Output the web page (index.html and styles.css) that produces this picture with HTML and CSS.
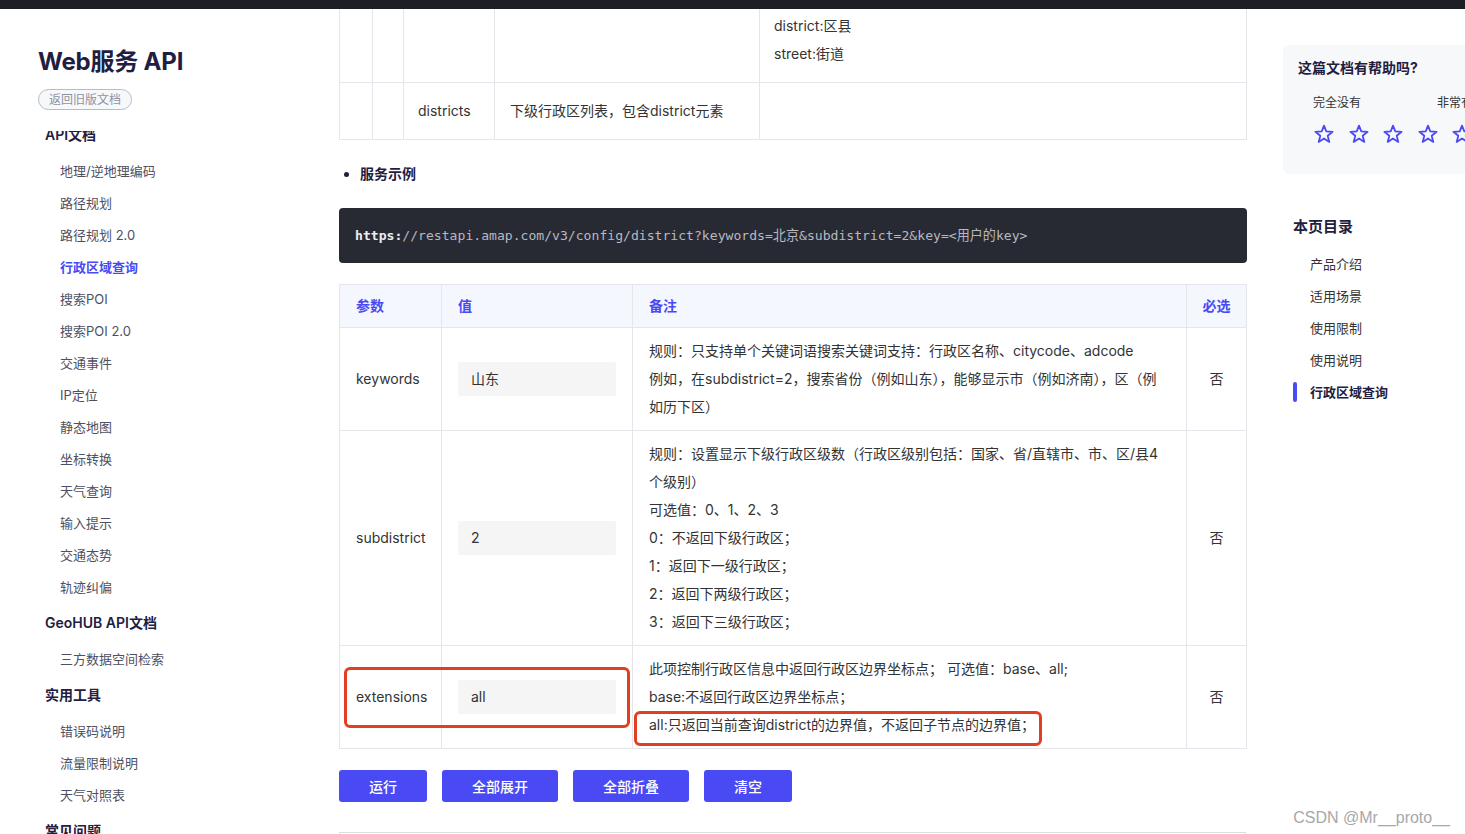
FILE: index.html
```html
<!DOCTYPE html>
<html lang="zh-CN">
<head>
<meta charset="utf-8">
<title>行政区域查询 - Web服务 API</title>
<link rel="stylesheet" href="styles.css">
</head>
<body>
<div class="topbar"></div>
<div class="layout">
  <aside class="sidebar">
    <div class="brand">
      <div class="brand-title">Web服务 API</div>
      <span class="old-link">返回旧版文档</span>
    </div>
    <div class="nav-scroll">
      <ul class="nav">
        <li class="nav-group">API文档</li>
        <li class="nav-item">地理/逆地理编码</li>
        <li class="nav-item">路径规划</li>
        <li class="nav-item">路径规划 2.0</li>
        <li class="nav-item active">行政区域查询</li>
        <li class="nav-item">搜索POI</li>
        <li class="nav-item">搜索POI 2.0</li>
        <li class="nav-item">交通事件</li>
        <li class="nav-item">IP定位</li>
        <li class="nav-item">静态地图</li>
        <li class="nav-item">坐标转换</li>
        <li class="nav-item">天气查询</li>
        <li class="nav-item">输入提示</li>
        <li class="nav-item">交通态势</li>
        <li class="nav-item">轨迹纠偏</li>
        <li class="nav-group">GeoHUB API文档</li>
        <li class="nav-item">三方数据空间检索</li>
        <li class="nav-group">实用工具</li>
        <li class="nav-item">错误码说明</li>
        <li class="nav-item">流量限制说明</li>
        <li class="nav-item">天气对照表</li>
        <li class="nav-group">常见问题</li>
      </ul>
    </div>
  </aside>

  <main class="main">
    <table class="result-table">
      <colgroup>
        <col class="c-indent1"><col class="c-indent2"><col class="c-name"><col class="c-desc"><col class="c-note">
      </colgroup>
      <tr>
        <td></td><td></td><td></td><td></td>
        <td>
          <p>country:国家</p>
          <p>province:省份（直辖市会在province和city显示）</p>
          <p>city:市（直辖市会在province和city显示）</p>
          <p>district:区县</p>
          <p>street:街道</p>
        </td>
      </tr>
      <tr>
        <td></td><td></td>
        <td>districts</td>
        <td class="pad-l">下级行政区列表，包含district元素</td>
        <td></td>
      </tr>
    </table>

    <ul class="section-list">
      <li>服务示例</li>
    </ul>

    <div class="code"><span class="code-scheme">https:</span>//restapi.amap.com/v3/config/district?keywords=北京&amp;subdistrict=2&amp;key=&lt;用户的key&gt;</div>

    <table class="param-table">
      <colgroup>
        <col class="p-name"><col class="p-val"><col class="p-note"><col class="p-req">
      </colgroup>
      <thead>
        <tr><th>参数</th><th>值</th><th>备注</th><th class="center">必选</th></tr>
      </thead>
      <tbody>
        <tr>
          <td>keywords</td>
          <td><div class="val-box">山东</div></td>
          <td class="note">规则：只支持单个关键词语搜索关键词支持：行政区名称、citycode、adcode<br>例如，在subdistrict=2，搜索省份（例如山东），能够显示市（例如济南），区（例<br>如历下区）</td>
          <td class="center">否</td>
        </tr>
        <tr>
          <td>subdistrict</td>
          <td><div class="val-box">2</div></td>
          <td class="note">规则：设置显示下级行政区级数（行政区级别包括：国家、省/直辖市、市、区/县4<br>个级别）<br>可选值：0、1、2、3<br>0：不返回下级行政区；<br>1：返回下一级行政区；<br>2：返回下两级行政区；<br>3：返回下三级行政区；</td>
          <td class="center">否</td>
        </tr>
        <tr>
          <td>extensions</td>
          <td><div class="val-box">all</div></td>
          <td class="note">此项控制行政区信息中返回行政区边界坐标点； 可选值：base、all;<br>base:不返回行政区边界坐标点；<br>all:只返回当前查询district的边界值，不返回子节点的边界值；</td>
          <td class="center">否</td>
        </tr>
      </tbody>
    </table>

    <div class="actions">
      <button class="btn">运行</button>
      <button class="btn">全部展开</button>
      <button class="btn">全部折叠</button>
      <button class="btn">清空</button>
    </div>

    <div class="result-box"></div>

    <div class="mark mark-1"></div>
    <div class="mark mark-2"></div>
  </main>

  <aside class="aside">
    <div class="feedback">
      <div class="feedback-title">这篇文档有帮助吗?</div>
      <div class="rate-labels"><span>完全没有</span><span class="rate-high">非常有帮助</span></div>
      <div class="stars">
        <svg class="star" viewBox="0 0 20 20"><polygon points="10,1.6 12.3,7.4 18.6,7.8 13.7,11.8 15.3,17.9 10,14.5 4.7,17.9 6.3,11.8 1.4,7.8 7.7,7.4"/></svg>
        <svg class="star" viewBox="0 0 20 20"><polygon points="10,1.6 12.3,7.4 18.6,7.8 13.7,11.8 15.3,17.9 10,14.5 4.7,17.9 6.3,11.8 1.4,7.8 7.7,7.4"/></svg>
        <svg class="star" viewBox="0 0 20 20"><polygon points="10,1.6 12.3,7.4 18.6,7.8 13.7,11.8 15.3,17.9 10,14.5 4.7,17.9 6.3,11.8 1.4,7.8 7.7,7.4"/></svg>
        <svg class="star" viewBox="0 0 20 20"><polygon points="10,1.6 12.3,7.4 18.6,7.8 13.7,11.8 15.3,17.9 10,14.5 4.7,17.9 6.3,11.8 1.4,7.8 7.7,7.4"/></svg>
        <svg class="star" viewBox="0 0 20 20"><polygon points="10,1.6 12.3,7.4 18.6,7.8 13.7,11.8 15.3,17.9 10,14.5 4.7,17.9 6.3,11.8 1.4,7.8 7.7,7.4"/></svg>
      </div>
    </div>

    <div class="toc">
      <div class="toc-title">本页目录</div>
      <ul class="toc-list">
        <li class="toc-item">产品介绍</li>
        <li class="toc-item">适用场景</li>
        <li class="toc-item">使用限制</li>
        <li class="toc-item">使用说明</li>
        <li class="toc-item active">行政区域查询</li>
      </ul>
    </div>
  </aside>

  <div class="watermark">CSDN @Mr__proto__</div>
</div>
</body>
</html>
```

FILE: styles.css
```css
* {
  box-sizing: border-box;
  margin: 0;
  padding: 0;
}

html, body {
  width: 1465px;
  height: 834px;
}

body {
  font-family: Inter, "Noto Sans CJK SC", sans-serif;
  color: #333;
  background: #fff;
  overflow: hidden;
}

.topbar {
  height: 9px;
  background: #1e1f24;
}

.layout {
  display: grid;
  grid-template-columns: 339px 908px 218px;
  height: 825px;
  position: relative;
}

/* ---------- sidebar ---------- */
.sidebar {
  display: flex;
  flex-direction: column;
  overflow: hidden;
}

.brand {
  display: flex;
  flex-direction: column;
  align-items: flex-start;
  padding: 37px 0 0 38px;
}

.brand-title {
  font-size: 24px;
  line-height: 32px;
  font-weight: 700;
  color: #1f2041;
  white-space: nowrap;
  letter-spacing: -0.2px;
}

.old-link {
  margin-top: 11px;
  height: 21px;
  line-height: 19px;
  padding: 0 10px;
  border: 1px solid #b7bacb;
  border-radius: 11px;
  font-size: 12px;
  color: #8d91a5;
  background: #f7f8fa;
}

.nav-scroll {
  margin-top: 21px;
  flex: 1;
  overflow: hidden;
}

.nav {
  list-style: none;
  margin-top: -16px;
}

.nav-group {
  height: 40px;
  line-height: 40px;
  padding-left: 45px;
  font-size: 14px;
  font-weight: 600;
  color: #1f2041;
}

.nav-item {
  height: 32px;
  line-height: 32px;
  padding-left: 60px;
  font-size: 13px;
  color: #4e5060;
}

.nav-item.active {
  color: #4a4af5;
  font-weight: 600;
}

/* ---------- main ---------- */
.main {
  position: relative;
  overflow: hidden;
}

.result-table,
.param-table {
  width: calc(100% - 1px);
  border-collapse: collapse;
  table-layout: fixed;
  font-size: 14px;
}

.result-table {
  margin-top: -96px;
}

.result-table td {
  border: 1px solid #e4e6eb;
  padding: 14px 14px;
  line-height: 28px;
  vertical-align: middle;
  color: #333;
}

.result-table td.pad-l {
  padding-left: 15px;
}

.c-indent1 { width: 33px; }
.c-indent2 { width: 31px; }
.c-name { width: 91px; }
.c-desc { width: 265px; }
.c-note { width: 487px; }

.section-list {
  list-style: none;
  margin: 22px 0 0 5px;
}

.section-list li {
  display: flex;
  align-items: center;
  font-size: 14px;
  line-height: 24px;
  font-weight: 600;
  color: #1f2041;
}

.section-list li::before {
  content: "";
  width: 5px;
  height: 5px;
  border-radius: 50%;
  background: #1f2041;
  margin-right: 11px;
}

.code {
  margin-top: 22px;
  background: #282a33;
  border-radius: 4px;
  padding: 18px 16px;
  font-family: "DejaVu Sans Mono", "Noto Sans CJK SC", monospace;
  font-size: 13.1px;
  line-height: 19px;
  color: #b6b9c2;
  white-space: nowrap;
}

.code-scheme {
  color: #eceef2;
  font-weight: 700;
}

.param-table {
  margin-top: 21px;
}

.p-name { width: 102px; }
.p-val { width: 191px; }
.p-note { width: 554px; }
.p-req { width: 60px; }

.param-table th {
  height: 43px;
  padding: 0 16px 2px;
  background: #f5f7ff;
  color: #4a4af5;
  font-weight: 700;
  text-align: left;
  border: 1px solid #e4e6eb;
}

.param-table td {
  border: 1px solid #e4e6eb;
  padding: 9px 16px;
  line-height: 28px;
  vertical-align: middle;
  color: #333;
}

.param-table .center {
  text-align: center;
  padding-left: 0;
  padding-right: 0;
}

.param-table td.note {
  white-space: nowrap;
}

.val-box {
  height: 34px;
  line-height: 34px;
  padding: 0 13px;
  background: #f5f5f5;
  border-radius: 2px;
}

.actions {
  display: flex;
  gap: 15px;
  margin-top: 21px;
}

.btn {
  height: 32px;
  padding: 0 30px;
  border: none;
  border-radius: 3px;
  background: #4a4af5;
  color: #fff;
  font-family: inherit;
  font-size: 14px;
  font-weight: 500;
}

.result-box {
  margin-top: 30px;
  width: calc(100% - 1px);
  height: 120px;
  border: 1px solid #dcdde2;
}

.mark {
  position: absolute;
  border: 3px solid #e23f22;
  border-radius: 6px;
}

.mark-1 {
  left: 5px;
  top: 658px;
  width: 286px;
  height: 61px;
}

.mark-2 {
  left: 295px;
  top: 702px;
  width: 408px;
  height: 35px;
}

/* ---------- right aside ---------- */
.aside {
  overflow: hidden;
}

.feedback {
  margin: 36px 0 0 36px;
  width: 210px;
  height: 129px;
  padding: 13px 15px 0;
  background: #f7f8fa;
  border-radius: 6px;
}

.feedback-title {
  font-size: 14px;
  line-height: 20px;
  font-weight: 700;
  color: #1f2041;
  white-space: nowrap;
}

.rate-labels {
  display: flex;
  margin-top: 16px;
  padding-left: 15px;
  font-size: 12px;
  line-height: 18px;
  color: #333;
  white-space: nowrap;
}

.rate-high {
  margin-left: 76px;
}

.stars {
  display: flex;
  gap: 14.5px;
  margin-top: 12px;
  padding-left: 16px;
}

.star {
  flex: none;
  width: 20px;
  height: 20px;
  fill: none;
  stroke: #4a4af5;
  stroke-width: 1.8;
  stroke-linejoin: round;
}

.toc {
  padding-left: 46px;
  margin-top: 42px;
}

.toc-title {
  font-size: 15px;
  line-height: 22px;
  font-weight: 700;
  color: #1f2041;
}

.toc-list {
  list-style: none;
  margin-top: 10px;
}

.toc-item {
  position: relative;
  height: 32px;
  line-height: 32px;
  padding-left: 17px;
  font-size: 13px;
  color: #333;
  white-space: nowrap;
}

.toc-item.active {
  font-weight: 700;
  color: #1f2041;
}

.toc-item.active::before {
  content: "";
  position: absolute;
  left: 0;
  top: 6px;
  width: 4px;
  height: 20px;
  border-radius: 2px;
  background: #4a4af5;
}

.watermark {
  position: absolute;
  right: 15px;
  bottom: 6px;
  font-family: "Liberation Sans", Arial, sans-serif;
  font-size: 16px;
  line-height: 20px;
  color: #a8a8a8;
  white-space: nowrap;
}
```
